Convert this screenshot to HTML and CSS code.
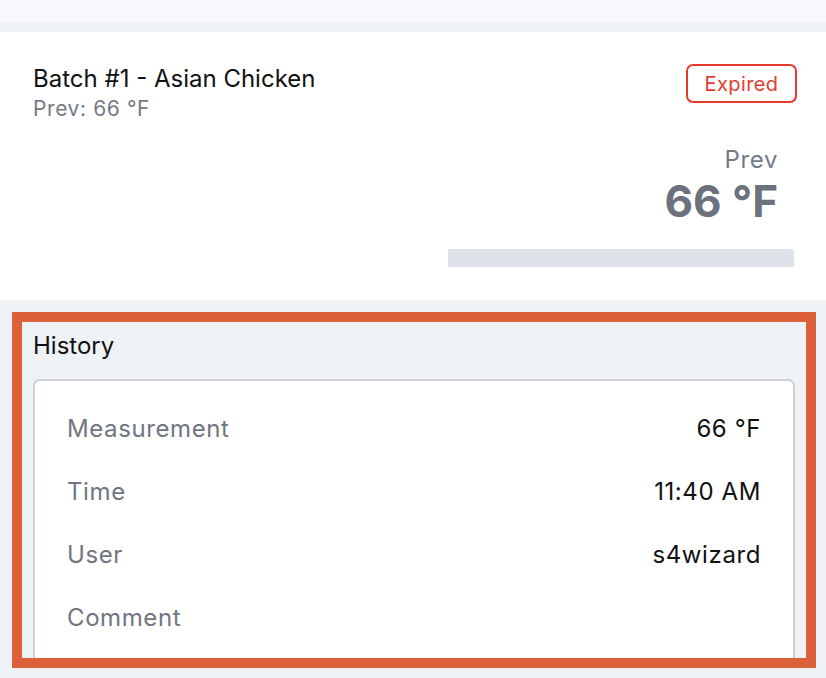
FILE: index.html
```html
<!DOCTYPE html>
<html>
<head>
<meta charset="utf-8">
<link rel="stylesheet" href="styles.css">
</head>
<body>
<div class="topbar"></div>
<div class="gap"></div>
<section class="card">
  <div class="card-head">
    <div class="title-block">
      <div class="title">Batch #1 - Asian Chicken</div>
      <div class="subtitle">Prev: 66 °F</div>
    </div>
    <div class="badge">Expired</div>
  </div>
  <div class="reading">
    <div class="reading-label">Prev</div>
    <div class="reading-value">66 °F</div>
  </div>
  <div class="bar-row"><div class="bar"></div></div>
</section>
<section class="history">
  <div class="history-title">History</div>
  <div class="history-card">
    <div class="row"><span class="label">Measurement</span><span class="value">66 °F</span></div>
    <div class="row"><span class="label">Time</span><span class="value">11:40 AM</span></div>
    <div class="row"><span class="label">User</span><span class="value">s4wizard</span></div>
    <div class="row"><span class="label">Comment</span><span class="value"></span></div>
  </div>
  <div class="highlight"></div>
</section>
</body>
</html>
```
FILE: styles.css
```css
html, body {
  margin: 0;
  padding: 0;
}
body {
  width: 826px;
  height: 678px;
  overflow: hidden;
  background: #eff2f5;
  font-family: Inter, Roboto, "Liberation Sans", sans-serif;
  color: #111;
}
.topbar {
  height: 22px;
  background: #f8f9fe;
}
.gap {
  height: 10px;
  background: #eff2f5;
}
.card {
  background: #fff;
  height: 268px;
  box-sizing: border-box;
  padding: 31px 29px 0 33px;
}
.card-head {
  display: flex;
  justify-content: space-between;
  align-items: flex-start;
}
.title {
  font-size: 24px;
  line-height: 32px;
  color: #111;
}
.subtitle {
  font-size: 21px;
  line-height: 27px;
  letter-spacing: 0.6px;
  color: #737a86;
}
.badge {
  margin-top: 1px;
  width: 111px;
  height: 39px;
  box-sizing: border-box;
  border: 2px solid #e53b2f;
  border-radius: 7px;
  color: #e53b2f;
  font-size: 20px;
  letter-spacing: 0.4px;
  display: flex;
  align-items: center;
  justify-content: center;
}
.reading {
  display: flex;
  flex-direction: column;
  align-items: flex-end;
  padding-right: 19px;
  margin-top: 23px;
}
.reading-label {
  font-size: 24px;
  line-height: 30px;
  letter-spacing: 0.6px;
  color: #737a86;
}
.reading-value {
  font-size: 44px;
  font-weight: 700;
  line-height: 52px;
  color: #6b717d;
}
.bar-row {
  display: flex;
  justify-content: flex-end;
  padding-right: 3px;
  margin-top: 22px;
}
.bar {
  width: 346px;
  height: 18px;
  background: #dde3e9;
  border-top-right-radius: 3px;
}
.history {
  position: relative;
  padding: 30px 31px 0 33px;
  height: 378px;
  box-sizing: border-box;
}
.history-title {
  font-size: 24px;
  line-height: 32px;
  color: #111;
}
.history-card {
  margin-top: 17px;
  background: #fff;
  border: 2px solid #cdd0d6;
  border-radius: 7px;
  padding: 16px 32px 0 32px;
  height: 285px;
  box-sizing: border-box;
}
.row {
  display: flex;
  justify-content: space-between;
  align-items: center;
  height: 63px;
  font-size: 24px;
  letter-spacing: 0.6px;
}
.label {
  color: #6f7682;
}
.value {
  color: #111;
}
.highlight {
  position: absolute;
  left: 12px;
  top: 12px;
  width: 804px;
  height: 356px;
  box-sizing: border-box;
  border: 10px solid #dc603a;
  pointer-events: none;
}
```
